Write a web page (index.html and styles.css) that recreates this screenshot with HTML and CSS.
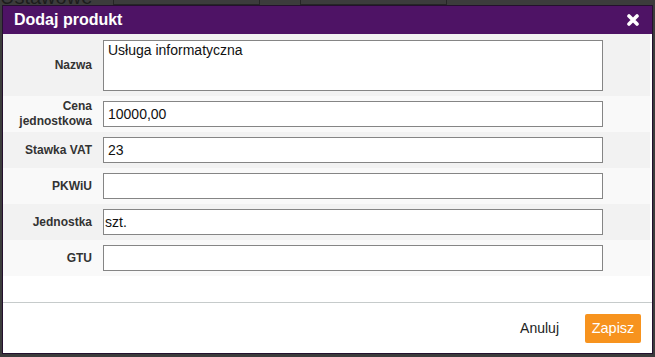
FILE: index.html
```html
<!DOCTYPE html>
<html lang="pl">
<head>
<meta charset="UTF-8">
<meta name="viewport" content="width=device-width, initial-scale=1.0">
<title>Dodaj produkt</title>
<link rel="stylesheet" href="styles.css">
</head>
<body>
  <div class="page">
    <div class="page-row">
      <span class="page-label">Ustawowe</span>
      <span class="page-box wide"></span>
      <span class="page-box"></span>
    </div>
  </div>
  <div class="overlay"></div>
  <div class="modal">
    <div class="modal-header">
      <h1>Dodaj produkt</h1>
      <span class="close">
        <svg width="12" height="12" viewBox="0 0 12 12"><path d="M2 2 L10 10 M10 2 L2 10" stroke="#fff" stroke-width="3.6" stroke-linecap="round"/></svg>
      </span>
    </div>
    <div class="modal-body">
      <div class="form">
        <div class="row tall">
          <label>Nazwa</label>
          <div class="field"><textarea>Usługa informatyczna</textarea></div>
        </div>
        <div class="row">
          <label>Cena jednostkowa</label>
          <div class="field"><input type="text" value="10000,00"></div>
        </div>
        <div class="row">
          <label>Stawka VAT</label>
          <div class="field"><input type="text" value="23"></div>
        </div>
        <div class="row">
          <label>PKWiU</label>
          <div class="field"><input type="text" value=""></div>
        </div>
        <div class="row">
          <label>Jednostka</label>
          <div class="field"><input type="text" value="szt." class="tight"></div>
        </div>
        <div class="row">
          <label>GTU</label>
          <div class="field"><input type="text" value=""></div>
        </div>
      </div>
    </div>
    <div class="modal-footer">
      <button class="btn-link">Anuluj</button>
      <button class="btn-save">Zapisz</button>
    </div>
  </div>
</body>
</html>
```

FILE: styles.css
```css
body { margin: 0; background-color: #3c3c3c; font-family: "Liberation Sans", Arial, sans-serif; width: 655px; height: 357px; overflow: hidden; }
.page { margin-top: -11px; }
.page-row { display: flex; align-items: flex-end; gap: 40px; height: 16px; }
.page-label { color: #1c1c1c; font-size: 20px; line-height: 16px; width: 73px; }
.page-box { display: block; width: 145px; height: 15px; border: 1px solid #262626; }
.overlay { position: absolute; left: 0; top: 0; right: 0; bottom: 0; }
.modal { position: absolute; left: 2px; top: 5px; width: 649px; height: 347px; border: 1px solid #24102e; background-color: #fff; display: flex; flex-direction: column; }
.modal-header { height: 28px; background-color: #4e1365; display: flex; align-items: center; justify-content: space-between; padding: 0 13px 0 11px; }
.modal-header h1 { margin: 0; color: #fff; font-size: 16px; font-weight: bold; }
.close { display: flex; cursor: pointer; }
.modal-body { padding: 0 2px 26px 0; border-bottom: 1px solid #c6cbcb; }
.row { display: grid; grid-template-columns: 94px 1fr; align-items: center; background-color: #f9f9f9; }
.row:nth-child(odd) { background-color: #f2f2f2; }
.row label { text-align: right; padding-right: 5px; font-size: 12px; font-weight: bold; color: #333; line-height: 15px; }
.field { padding: 5px 6px; }
.row.tall .field { padding-top: 6px; }
input, textarea { box-sizing: border-box; width: 500px; height: 26px; border: 1px solid #858585; background-color: #fff; font-family: "Liberation Sans", Arial, sans-serif; font-size: 14px; color: #111; padding: 2px 4px; margin: 0; display: block; }
input.tight { padding-left: 1px; }
textarea { height: 51px; resize: none; padding: 1px 4px; }
.modal-footer { flex: 1; display: flex; align-items: center; justify-content: flex-end; gap: 26px; padding: 0 11px 0 0; }
.btn-link { background: none; border: none; font-family: "Liberation Sans", Arial, sans-serif; font-size: 14px; color: #222; padding: 0; cursor: pointer; }
.btn-save { height: 29px; width: 56px; padding: 0; background-color: #f7931e; border: none; border-radius: 2px; color: #fff; font-family: "Liberation Sans", Arial, sans-serif; font-size: 14.5px; cursor: pointer; }
```
